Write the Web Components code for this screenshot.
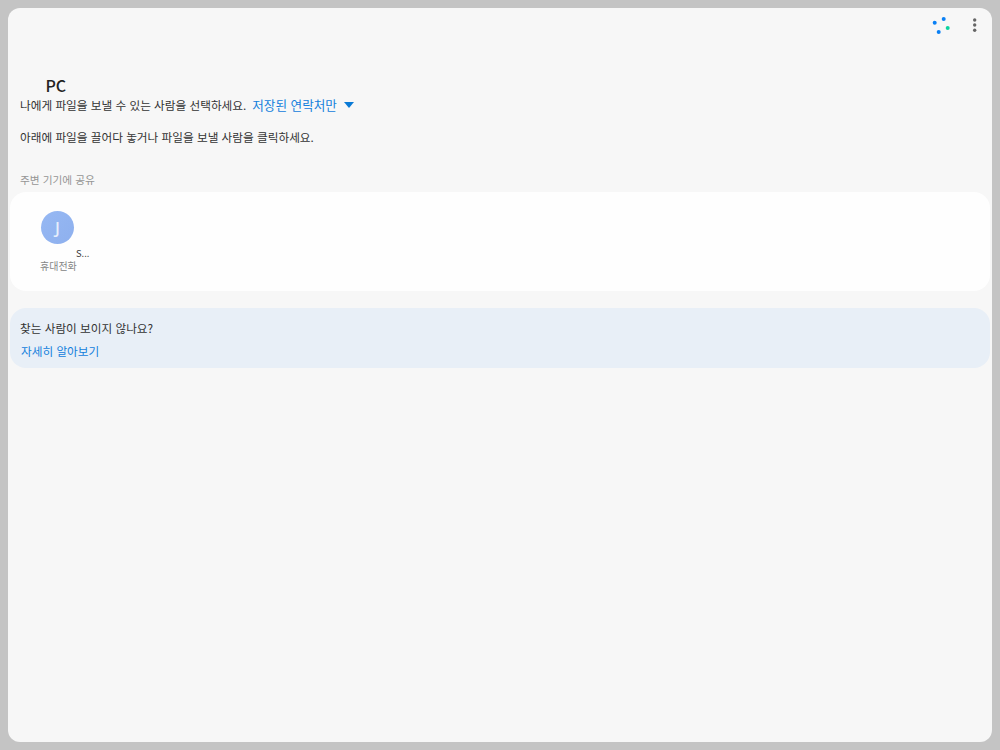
<!DOCTYPE html>
<html lang="ko">
<head>
<meta charset="utf-8">
<title>Quick Share</title>
<style>
  html,body{margin:0;height:100%;background:#c4c4c4;overflow:hidden}
  body{font-family:"Noto Sans CJK KR","Noto Sans",sans-serif}
</style>
</head>
<body>
<share-window>
  <title-bar slot="top"></title-bar>
  <share-intro slot="intro" device="PC"></share-intro>
  <share-section slot="nearby" label="주변 기기에 공유">
    <device-tile initial="J" name="S..." kind="휴대전화"></device-tile>
  </share-section>
  <help-card slot="help" question="찾는 사람이 보이지 않나요?" link="자세히 알아보기"></help-card>
</share-window>

<script>
// small helper so each element just declares html + css
function shadow(el, html){
  el.attachShadow({mode:'open'}).innerHTML = html;
}

class ShareWindow extends HTMLElement{
  constructor(){
    super();
    shadow(this, `
      <style>
        :host{
          display:flex; flex-direction:column; box-sizing:border-box;
          width:984px; height:734px; margin:8px;
          background:#f7f7f7; border-radius:12px; overflow:hidden;
        }
        .nearby{margin-top:26px}
        .help{margin-top:17px}
      </style>
      <slot name="top"></slot>
      <slot name="intro"></slot>
      <div class="nearby"><slot name="nearby"></slot></div>
      <div class="help"><slot name="help"></slot></div>
    `);
  }
}

class TitleBar extends HTMLElement{
  constructor(){
    super();
    shadow(this, `
      <style>
        :host{display:flex; justify-content:flex-end; align-items:center; height:34px; padding-right:9px}
        svg{display:block}
        .more{margin-left:15px}
      </style>
      <svg width="20" height="20" viewBox="0 0 20 20">
        <circle cx="2.7" cy="7.7" r="2" fill="#0a80f5"/>
        <circle cx="11.7" cy="4" r="2" fill="#0a80f5"/>
        <circle cx="15.7" cy="13" r="2" fill="#0cd3a0"/>
        <circle cx="6.7" cy="17" r="2" fill="#0a80f5"/>
      </svg>
      <svg class="more" width="16" height="20" viewBox="0 0 16 20">
        <circle cx="7.7" cy="5" r="1.7" fill="#666"/>
        <circle cx="7.7" cy="10" r="1.7" fill="#666"/>
        <circle cx="7.7" cy="15.3" r="1.7" fill="#666"/>
      </svg>
    `);
  }
}

class ShareIntro extends HTMLElement{
  constructor(){
    super();
    shadow(this, `
      <style>
        :host{display:block; padding:32px 0 0 12px; color:#333; font-size:11.65px}
        h1{margin:0 0 0 25.5px; font-size:16px; line-height:22px; font-weight:500; color:#222}
        .row{display:flex; align-items:center; height:18px; line-height:18px; white-space:nowrap}
        .filter{margin-left:6px; color:#1380dc; font-size:12.6px}
        svg{margin-left:7px; display:block}
        p{margin:14px 0 0; line-height:17px}
      </style>
      <h1>${this.getAttribute('device')}</h1>
      <div class="row">
        <span>나에게 파일을 보낼 수 있는 사람을 선택하세요.</span>
        <span class="filter">저장된 연락처만</span>
        <svg width="10" height="6" viewBox="0 0 10 6"><path d="M0 0h10L5 6z" fill="#0a7ad6"/></svg>
      </div>
      <p>아래에 파일을 끌어다 놓거나 파일을 보낼 사람을 클릭하세요.</p>
    `);
  }
}

class ShareSection extends HTMLElement{
  constructor(){
    super();
    shadow(this, `
      <style>
        :host{display:block; padding-top:1px}
        .label{padding-left:12px; font-size:10.7px; line-height:16px; color:#959595}
        .card{
          display:flex; box-sizing:border-box; height:99px; margin:4px 2px 0;
          background:#fefefe; border-radius:16px;
        }
      </style>
      <div class="label">${this.getAttribute('label')}</div>
      <div class="card"><slot></slot></div>
    `);
  }
}

class DeviceTile extends HTMLElement{
  constructor(){
    super();
    shadow(this, `
      <style>
        :host{display:block; padding:19px 0 0 23px; width:90px; box-sizing:content-box}
        .avatar{
          display:flex; align-items:center; justify-content:center;
          width:33px; height:33px; margin-left:8px; border-radius:50%;
          background:linear-gradient(135deg,#96b8f3,#8eb0ee); color:#e6eefc;
          font-size:17px; font-weight:500; line-height:33px;
          font-family:"Noto Sans",sans-serif;
        }
        .name{margin:2px 0 0 43px; font-size:9.4px; line-height:14px; color:#333}
        .kind{margin:-1px 0 0 7px; font-size:10px; line-height:14px; color:#858585; white-space:nowrap}
      </style>
      <div class="avatar">${this.getAttribute('initial')}</div>
      <div class="name">${this.getAttribute('name')}</div>
      <div class="kind">${this.getAttribute('kind')}</div>
    `);
  }
}

class HelpCard extends HTMLElement{
  constructor(){
    super();
    shadow(this, `
      <style>
        :host{
          display:block; box-sizing:border-box; height:60px; margin:0 2px;
          padding:11px 0 0 10px; background:#e8eff7; border-radius:16px;
          font-size:11.65px; line-height:18px; color:#333;
        }
        .link{display:block; margin:5px 0 0 1px; color:#1380dc}
      </style>
      <div>${this.getAttribute('question')}</div>
      <span class="link">${this.getAttribute('link')}</span>
    `);
  }
}

customElements.define('share-window', ShareWindow);
customElements.define('title-bar', TitleBar);
customElements.define('share-intro', ShareIntro);
customElements.define('share-section', ShareSection);
customElements.define('device-tile', DeviceTile);
customElements.define('help-card', HelpCard);
</script>
</body>
</html>
